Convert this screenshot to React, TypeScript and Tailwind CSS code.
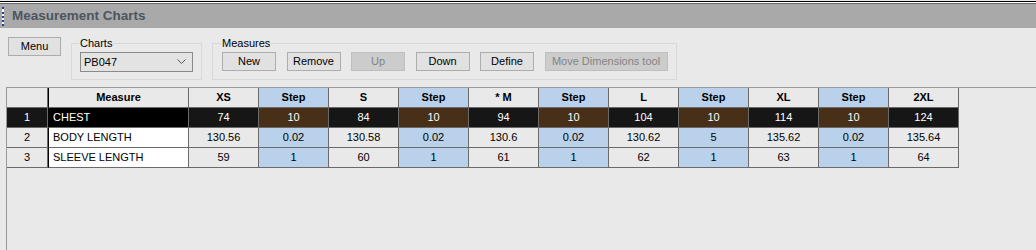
import React from 'react';

const sizes = ['XS', 'S', '* M', 'L', 'XL', '2XL'];

const rows = [
  { name: 'CHEST', vals: ['74', '84', '94', '104', '114', '124'], steps: ['10', '10', '10', '10', '10'] },
  { name: 'BODY LENGTH', vals: ['130.56', '130.58', '130.6', '130.62', '135.62', '135.64'], steps: ['0.02', '0.02', '0.02', '5', '0.02'] },
  { name: 'SLEEVE LENGTH', vals: ['59', '60', '61', '62', '63', '64'], steps: ['1', '1', '1', '1', '1'] },
];

function Btn({ label, disabled, w = 'w-[54px]' }: any) {
  return (
    <div
      className={`${w} h-[19px] flex items-center justify-center border text-[11px] leading-none ${
        disabled ? 'bg-[#cccccc] border-[#bfbfbf] text-[#838383]' : 'bg-[#e1e1e1] border-[#adadad] text-black'
      }`}
    >
      {label}
    </div>
  );
}

export default function App() {
  const cell = 'h-[20px] flex items-center justify-center border-r border-b border-[#6a6a6a] text-[11px]';

  return (
    <div className="w-[1036px] h-[250px] overflow-hidden bg-[#e9e9e9] flex flex-col" style={{ fontFamily: '"Liberation Sans", Arial, sans-serif' }}>
      <div className="h-[1px] bg-[#e9e9e9]" />
      <div className="h-[1px] bg-black" />
      <div className="h-[1px] bg-white" />
      <div className="h-[25px] bg-[#a9a9a9] border-t border-[#6a6a6a] flex items-center">
        <div className="ml-[2px] w-[2px] h-[19px] border-l-2 border-dotted border-[#24408f] bg-white" />
        <span className="ml-[8px] text-[13.5px] font-bold text-[#4c5560]">Measurement Charts</span>
      </div>

      {/* toolbar */}
      <div className="flex items-start pl-[8px] pt-[8px] h-[59px]">
        <div className="mt-[1px]">
          <Btn label="Menu" w="w-[53px]" />
        </div>
        <fieldset className="ml-[10px] w-[131px] h-[44px] border border-[#d8d8d8] px-[8px] pt-[2px]">
          <legend className="px-[1px] ml-[-1px] text-[11px] leading-[14px] text-black">Charts</legend>
          <div className="w-[113px] h-[20px] bg-[#e3e3e3] border border-[#8a8a8a] flex items-center justify-between pl-[3px] pr-[6px] text-[11px]">
            <span>PB047</span>
            <svg width="9" height="6" viewBox="0 0 9 6">
              <path d="M0.5 0.5 L4.5 4.5 L8.5 0.5" fill="none" stroke="#555" strokeWidth="1" />
            </svg>
          </div>
        </fieldset>
        <fieldset className="ml-[10px] w-[465px] h-[44px] border border-[#d8d8d8] pl-[9px] pt-[2px]">
          <legend className="px-[1px] ml-[-1px] text-[11px] leading-[14px] text-black">Measures</legend>
          <div className="flex gap-[10.5px]">
            <Btn label="New" />
            <Btn label="Remove" />
            <Btn label="Up" disabled />
            <Btn label="Down" />
            <Btn label="Define" />
            <Btn label="Move Dimensions tool" disabled w="w-[123px]" />
          </div>
        </fieldset>
      </div>

      {/* grid */}
      <div className="ml-[6px] flex-1 border-t border-l border-[#9a9a9a]">
        <div className="grid grid-cols-[41px_141px_repeat(11,70px)] w-[952px]">
          <div className={`${cell} bg-[#e9e9e9]`} />
          <div className={`${cell} bg-[#e9e9e9] font-bold border-l border-l-black`}>Measure</div>
          {sizes.map((s, i) => (
            <React.Fragment key={s}>
              <div className={`${cell} bg-[#e9e9e9] font-bold`}>{s}</div>
              {i < 5 && <div className={`${cell} bg-[#b9d1ea] font-bold`}>Step</div>}
            </React.Fragment>
          ))}
          {rows.map((r, ri) => {
            const sel = ri === 0;
            return (
              <React.Fragment key={r.name}>
                <div className={`${cell} ${sel ? 'bg-[#161616] text-white' : 'bg-[#e9e9e9] text-black'}`}>{ri + 1}</div>
                <div className={`${cell} !justify-start pl-[4px] border-l border-l-black ${sel ? 'bg-black text-white' : 'bg-white text-black'}`}>{r.name}</div>
                {r.vals.map((v, i) => (
                  <React.Fragment key={i}>
                    <div className={`${cell} ${sel ? 'bg-[#161616] text-white' : 'bg-[#e9e9e9] text-black'}`}>{v}</div>
                    {i < 5 && <div className={`${cell} ${sel ? 'bg-[#472f18] text-white' : 'bg-[#b9d1ea] text-black'}`}>{r.steps[i]}</div>}
                  </React.Fragment>
                ))}
              </React.Fragment>
            );
          })}
        </div>
      </div>
    </div>
  );
}
